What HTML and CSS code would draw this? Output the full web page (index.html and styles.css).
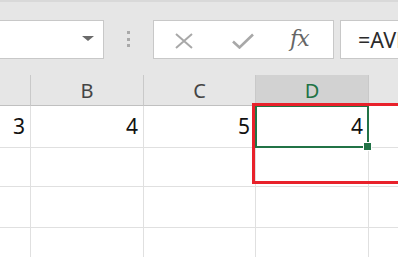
FILE: index.html
```html
<!DOCTYPE html>
<html>
<head>
<meta charset="utf-8">
<link rel="stylesheet" href="styles.css">
</head>
<body>
<div class="app">
  <div class="toolbar">
    <div class="namebox">
      <span class="caret"></span>
    </div>
    <div class="grip"><i></i><i></i><i></i></div>
    <div class="fxbox">
      <svg class="ico-x" width="18" height="16" viewBox="0 0 18 16"><path d="M1 1 L17 15 M17 1 L1 15" stroke="#a8a8a8" stroke-width="2" fill="none"/></svg>
      <svg class="ico-check" width="22" height="16" viewBox="0 0 22 16"><path d="M1 8.5 L7.5 14.5 L21 1.5" stroke="#a8a8a8" stroke-width="2.6" fill="none"/></svg>
      <span class="fx">fx</span>
    </div>
    <div class="formula">=AVERAGE(A1:C1)</div>
  </div>
  <div class="sheet">
    <div class="hdr corner"></div>
    <div class="hdr">B</div>
    <div class="hdr">C</div>
    <div class="hdr active">D</div>
    <div class="hdr last"></div>

    <div class="cell r1">3</div>
    <div class="cell r1">4</div>
    <div class="cell r1">5</div>
    <div class="cell r1 selected">4</div>
    <div class="cell r1 last"></div>

    <div class="cell r2"></div>
    <div class="cell r2"></div>
    <div class="cell r2"></div>
    <div class="cell r2"></div>
    <div class="cell r2 last"></div>

    <div class="cell r3"></div>
    <div class="cell r3"></div>
    <div class="cell r3"></div>
    <div class="cell r3"></div>
    <div class="cell r3 last"></div>

    <div class="cell r4"></div>
    <div class="cell r4"></div>
    <div class="cell r4"></div>
    <div class="cell r4"></div>
    <div class="cell r4 last"></div>

    <div class="highlight"></div>
  </div>
</div>
</body>
</html>
```
FILE: styles.css
```css
* { box-sizing: border-box; }
html, body { margin: 0; padding: 0; }
body {
  width: 398px;
  height: 257px;
  overflow: hidden;
  background: #ffffff;
  font-family: "Noto Sans", "Open Sans", sans-serif;
}
.app {
  width: 398px;
  height: 257px;
  overflow: hidden;
}
.toolbar {
  height: 75px;
  background: #e6e6e6;
  border-top: 2px solid #d9d9d9;
  padding-top: 18px;
  display: flex;
  align-items: flex-start;
  white-space: nowrap;
}
.namebox {
  width: 104px;
  height: 39px;
  background: #fff;
  border: 1px solid #c8c8c8;
  border-left: none;
  position: relative;
  flex: none;
}
.caret {
  position: absolute;
  left: 82px;
  top: 15px;
  width: 0;
  height: 0;
  border-left: 6px solid transparent;
  border-right: 6px solid transparent;
  border-top: 5px solid #6a6a6a;
}
.grip {
  width: 49px;
  flex: none;
  display: flex;
  flex-direction: column;
  align-items: center;
  gap: 3.5px;
  padding-top: 11px;
}
.grip i {
  display: block;
  width: 3px;
  height: 3px;
  background: #a9a9a9;
}
.fxbox {
  width: 181px;
  height: 39px;
  background: #fff;
  border: 1px solid #c8c8c8;
  flex: none;
  display: flex;
  align-items: center;
  padding-left: 21px;
}
.ico-x { flex: none; margin-right: 39px; margin-top: 2px; }
.ico-check { flex: none; margin-right: 36px; margin-top: 2px; }
.fx {
  font-family: "DejaVu Serif", "Liberation Serif", serif;
  font-style: italic;
  font-size: 22px;
  color: #666;
  margin-top: -3px;
  letter-spacing: -1px;
}
.formula {
  margin-left: 6px;
  flex: none;
  width: 200px;
  height: 39px;
  background: #fff;
  border: 1px solid #c8c8c8;
  border-right: none;
  font-size: 21.5px;
  color: #2b2b2b;
  line-height: 37px;
  padding-left: 17px;
  overflow: hidden;
}
.sheet {
  position: relative;
  display: grid;
  grid-template-columns: 31px 113px 112px 113px 1fr;
  grid-template-rows: 31px 42px 39px 41px 1fr;
  height: 182px;
}
.hdr {
  background: #e6e6e6;
  border-bottom: 1px solid #c0c0c0;
  border-right: 1px solid #c9c9c9;
  text-align: center;
  font-size: 20px;
  color: #444;
  line-height: 30px;
  padding-top: 1px;
}
.hdr.active {
  background: #d2d2d2;
  color: #217346;
}
.hdr.last { border-right: none; }
.cell {
  border-right: 1px solid #e0e0e0;
  border-bottom: 1px solid #e0e0e0;
  text-align: right;
  font-size: 21px;
  color: #111;
  padding-right: 5px;
  line-height: 41px;
}
.cell.r4 { border-bottom: none; }
.cell.last { border-right: none; }
.cell.selected {
  position: relative;
}
.cell.selected::after {
  content: "";
  position: absolute;
  left: -1px;
  top: -1px;
  right: -1px;
  bottom: -1px;
  border: 2px solid #217346;
}
.cell.selected::before {
  content: "";
  position: absolute;
  right: -4px;
  bottom: -4px;
  width: 7px;
  height: 7px;
  background: #217346;
  border: 1px solid #fff;
  z-index: 2;
}
.highlight {
  position: absolute;
  left: 252px;
  top: 28px;
  width: 160px;
  height: 81px;
  border: 3px solid #e8212b;
  z-index: 3;
  pointer-events: none;
}
```
